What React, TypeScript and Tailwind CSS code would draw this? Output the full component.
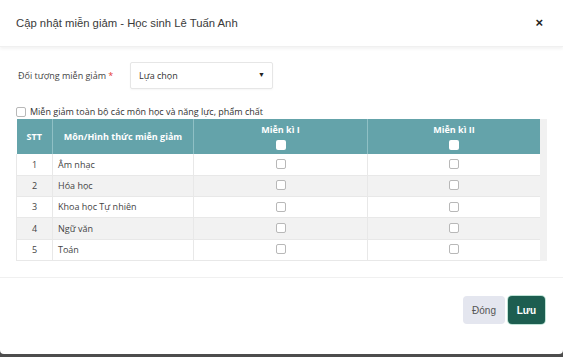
const subjects = ["Âm nhạc", "Hóa học", "Khoa học Tự nhiên", "Ngữ văn", "Toán"];

function Box({ filled }: { filled?: boolean }) {
  return (
    <span
      className={
        filled
          ? "inline-block w-[10px] h-[10px] rounded-[2px] bg-white"
          : "inline-block w-[10px] h-[10px] rounded-[2px] border border-[#b8b8b8] bg-white"
      }
    ></span>
  );
}

export default function App() {
  return (
    <div className="w-[563px] h-[357px] bg-[#4d4d4d] overflow-hidden">
      <div className="w-[563px] h-[354px] bg-white rounded-b-[4px] flex flex-col font-['Open_Sans',sans-serif] text-[#333]">
        <div className="h-[47px] flex items-center justify-between pl-[16px] pr-[20px] shadow-[0_2px_3px_rgba(0,0,0,0.05)] border-b border-[#f0f0f0]">
          <p className="font-['Liberation_Sans',Arial,sans-serif] text-[11.3px] text-[#3a3a3a]">
            Cập nhật miễn giảm - Học sinh Lê Tuấn Anh
          </p>
          <span className="font-['Liberation_Sans',Arial,sans-serif] text-[13px] font-bold text-[#222]">×</span>
        </div>

        <div className="px-[16px] pt-[15px] h-[231px] border-b border-[#f0f0f0]">
          <div className="flex items-center">
            <p className="w-[114px] pl-[2px] text-[9px] text-[#444] whitespace-nowrap">
              Đối tượng miễn giảm <span className="text-[#e53935]">*</span>
            </p>
            <div className="w-[143px] h-[27px] border border-[#e6e6e6] rounded-[2px] flex items-center justify-between pl-[8px] pr-[7px] shadow-[0_1px_2px_rgba(0,0,0,0.04)]">
              <span className="text-[9px] text-[#333]">Lựa chọn</span>
              <span className="text-[7px] text-[#222]">▼</span>
            </div>
          </div>

          <div className="flex items-center gap-[4px] mt-[17px] h-[12px]">
            <Box />
            <span className="text-[9px] text-[#333]">Miễn giảm toàn bộ các môn học và năng lực, phẩm chất</span>
          </div>

          <div className="flex mt-[1px]">
            <table className="w-[524px] border-collapse text-[9px] table-fixed">
              <thead>
                <tr className="bg-[#64a3aa] text-white font-bold h-[35px]">
                  <th className="w-[36px] border-r border-[#8fc0c5] font-bold">STT</th>
                  <th className="w-[141px] border-r border-[#8fc0c5] font-bold">Môn/Hình thức miễn giảm</th>
                  <th className="w-[174px] border-r border-[#8fc0c5] font-bold">
                    <div className="flex flex-col items-center gap-[3px]">
                      <span>Miễn kì I</span>
                      <Box filled />
                    </div>
                  </th>
                  <th className="font-bold">
                    <div className="flex flex-col items-center gap-[3px]">
                      <span>Miễn kì II</span>
                      <Box filled />
                    </div>
                  </th>
                </tr>
              </thead>
              <tbody>
                {subjects.map((s, i) => (
                  <tr
                    key={s}
                    className={
                      i % 2 === 1
                        ? "h-[21px] bg-[#f2f2f2] text-[#444]"
                        : "h-[21px] bg-white text-[#444]"
                    }
                  >
                    <td className="text-center border-l border-r border-b border-[#e8e8e8]">{i + 1}</td>
                    <td className="pl-[5px] border-r border-b border-[#e8e8e8]">{s}</td>
                    <td className="text-center border-r border-b border-[#e8e8e8] leading-none">
                      <Box />
                    </td>
                    <td className="text-center border-b border-[#e8e8e8] leading-none">
                      <Box />
                    </td>
                  </tr>
                ))}
              </tbody>
            </table>
            <div className="w-[7px] bg-[#f1f1f1] h-[142px]"></div>
          </div>
        </div>

        <div className="flex-1 flex justify-end items-start pt-[18px] pr-[18px] gap-[3px] font-['Liberation_Sans',Arial,sans-serif]">
          <button className="w-[42px] h-[28px] rounded-[4px] bg-[#e4e6ef] text-[#555] text-[10px]">Đóng</button>
          <button className="w-[37px] h-[28px] rounded-[4px] bg-[#1d5e50] text-white text-[10px] font-bold shadow-[0_0_0_1px_#bfe3d6]">
            Lưu
          </button>
        </div>
      </div>
    </div>
  );
}
